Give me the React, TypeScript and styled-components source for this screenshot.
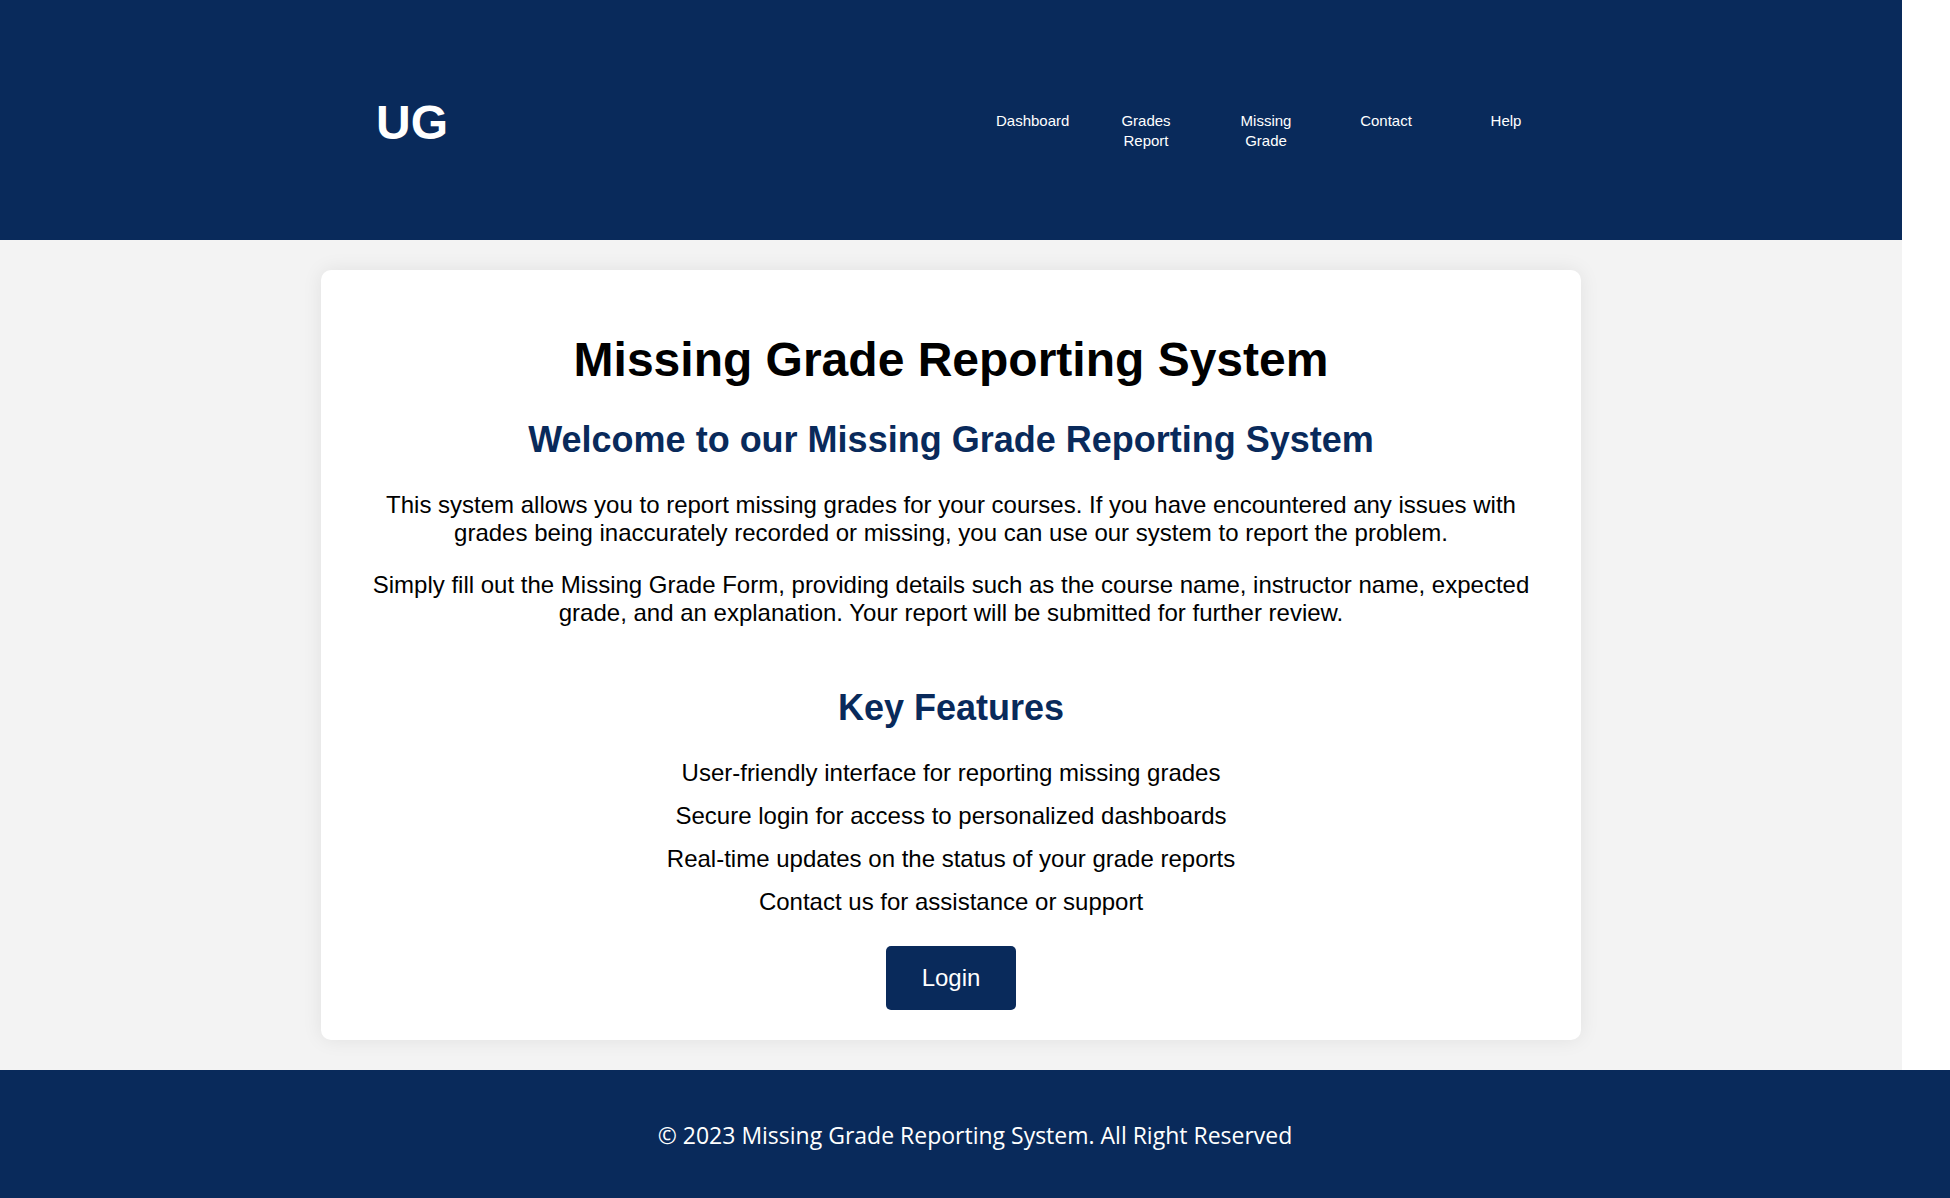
import React from 'react';
import styled, { createGlobalStyle } from 'styled-components';

const navy = '#092a5b';

const GlobalStyle = createGlobalStyle`
    html, body {
        margin: 0;
        padding: 0;
        background: #ffffff;
        font-family: "Liberation Sans", Arial, sans-serif;
    }
`;

const links = ['Dashboard', 'Grades Report', 'Missing Grade', 'Contact', 'Help'];

const features = [
    'User-friendly interface for reporting missing grades',
    'Secure login for access to personalized dashboards',
    'Real-time updates on the status of your grade reports',
    'Contact us for assistance or support',
];

const App = () => {
    return (
        <>
            <GlobalStyle />

            <Header>
                <Logo>UG</Logo>
                <Nav>
                    {links.map((l) => (
                        <NavItem key={l}>{l}</NavItem>
                    ))}
                </Nav>
            </Header>

            <Main>
                <Card>
                    <Title>Missing Grade Reporting System</Title>
                    <Subtitle>Welcome to our Missing Grade Reporting System</Subtitle>

                    <Text>
                        This system allows you to report missing grades for your courses. If you have encountered any issues with
                        grades being inaccurately recorded or missing, you can use our system to report the problem.
                    </Text>
                    <Text>
                        Simply fill out the Missing Grade Form, providing details such as the course name, instructor name, expected
                        grade, and an explanation. Your report will be submitted for further review.
                    </Text>

                    <FeatureTitle>Key Features</FeatureTitle>
                    <FeatureList>
                        {features.map((f) => (
                            <Feature key={f}>{f}</Feature>
                        ))}
                    </FeatureList>

                    <Btn>Login</Btn>
                </Card>
            </Main>

            <Footer>© 2023 Missing Grade Reporting System. All Right Reserved</Footer>
        </>
    );
};

export default App;

const Header = styled.header`
    width: calc(100% - 48px);
    height: 240px;
    box-sizing: border-box;
    background: ${navy};
    display: flex;
    justify-content: space-between;
    align-items: flex-start;
    padding: 99px 356px 0 376px;
`;

const Logo = styled.h1`
    margin: 0;
    color: #fff;
    font-size: 48px;
    line-height: 48px;
    font-weight: 700;
`;

const Nav = styled.ul`
    display: flex;
    gap: 60px;
    margin: 12px 10px 0 0;
    padding: 0;
    list-style: none;
`;

const NavItem = styled.li`
    width: 60px;
    text-align: center;
    color: #fff;
    font-family: "Comic Sans MS", "Liberation Sans", sans-serif;
    font-size: 15px;
    line-height: 20px;
`;

const Main = styled.main`
    width: calc(100% - 48px);
    box-sizing: border-box;
    background: #f3f3f3;
    padding: 30px 0 30px;
    display: flex;
    justify-content: center;
`;

const Card = styled.section`
    width: 1260px;
    box-sizing: border-box;
    background: #fff;
    border-radius: 10px;
    box-shadow: 0 0 20px rgba(0, 0, 0, 0.08);
    padding: 30px 40px 30px;
    text-align: center;
    color: #000;
`;

const Title = styled.h1`
    font-size: 48px;
    font-weight: 700;
    margin: 32px 0;
`;

const Subtitle = styled.h2`
    font-size: 36px;
    font-weight: 700;
    color: ${navy};
    margin: 0 0 30px;
`;

const Text = styled.p`
    font-size: 24px;
    margin: 0 0 24px;
`;

const FeatureTitle = styled.h2`
    font-size: 36px;
    font-weight: 700;
    color: ${navy};
    margin: 60px 0 30px;
`;

const FeatureList = styled.ul`
    list-style: none;
    padding: 0;
    margin: 0 0 30px;
`;

const Feature = styled.li`
    font-size: 24px;
    margin-bottom: 15px;
`;

const Btn = styled.button`
    display: block;
    margin: 0 auto;
    width: 130px;
    height: 64px;
    background: ${navy};
    color: #fff;
    border: none;
    border-radius: 5px;
    font-family: "Liberation Sans", Arial, sans-serif;
    font-size: 24px;
    cursor: pointer;
`;

const Footer = styled.footer`
    background: ${navy};
    color: #fff;
    height: 130px;
    display: flex;
    align-items: center;
    justify-content: center;
    font-family: "Open Sans", "Noto Sans", sans-serif;
    font-size: 23px;
`;
